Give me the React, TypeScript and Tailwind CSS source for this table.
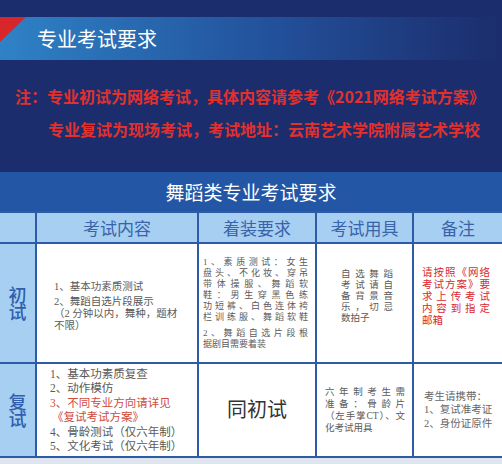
const sans = "font-['Noto_Sans_CJK_SC','Noto_Sans',sans-serif]";
const song = "font-['Liberation_Serif','Noto_Sans_CJK_SC',serif]";
const hei = "font-['Liberation_Sans','Noto_Sans_CJK_SC',sans-serif]";

function JLine({ text, last = false }: { text: string; last?: boolean }) {
  return (
    <div className={last ? "text-left" : "text-justify [text-align-last:justify]"}>{text}</div>
  );
}

export default function App() {
  return (
    <div className={`w-[502px] h-[464px] overflow-hidden bg-[#1b2d6c] ${sans}`}>
      {/* top strip */}
      <div className="h-[17px]" />

      {/* section banner */}
      <div className="relative h-[43px] flex items-center bg-gradient-to-r from-[#2f82c6] via-[#22509a] via-55% to-[#1b2d6c]">
        <svg className="absolute left-0 top-0" width="26" height="26" viewBox="0 0 26 26">
          <polygon points="0,0 26,0 0,25" fill="#d9262b" />
        </svg>
        <span className="pl-[37px] text-[20px] leading-none text-white">专业考试要求</span>
      </div>

      {/* notes */}
      <div className="h-[112px] flex flex-col pt-[28px] gap-[17px] font-bold text-[16px] leading-[16px] text-[#e2302d]">
        <div className="pl-[15px] whitespace-nowrap">注：专业初试为网络考试，具体内容请参考《2021网络考试方案》</div>
        <div className="pl-[48px] whitespace-nowrap">专业复试为现场考试，考试地址：云南艺术学院附属艺术学校</div>
      </div>

      {/* table */}
      <div className="bg-[#2d5ba8] flex flex-col gap-[2px] pb-[2px]">
        <div className="h-[39px] bg-[#2356a5] flex items-center justify-center text-white text-[19px] leading-none">
          舞蹈类专业考试要求
        </div>

        <div className="grid grid-cols-[35px_160px_116px_95px_88px] gap-[2px]">
          {/* header */}
          <div className="h-[29px] bg-[#a6cff2]" />
          <div className="h-[29px] bg-[#a6cff2] flex items-center justify-center text-[17px] text-[#3a63a8]">考试内容</div>
          <div className="h-[29px] bg-[#a6cff2] flex items-center justify-center text-[17px] text-[#3a63a8]">着装要求</div>
          <div className="h-[29px] bg-[#a6cff2] flex items-center justify-center text-[17px] text-[#3a63a8]">考试用具</div>
          <div className="h-[29px] bg-[#a6cff2] flex items-center justify-center text-[17px] text-[#3a63a8]">备注</div>

          {/* 初试 */}
          <div className="h-[118px] bg-[#a6cff2] flex items-center justify-center">
            <span className="[writing-mode:vertical-rl] text-[18px] leading-none tracking-[-1px] font-medium text-[#2f5fae]">初试</span>
          </div>
          <div className={`h-[118px] bg-white flex flex-col justify-center pl-[17px] pt-[6px] text-[10.5px] leading-[12px] text-[#5a5a5a] ${song}`}>
            <div>1、基本功素质测试</div>
            <div className="mt-[3px]">2、舞蹈自选片段展示</div>
            <div>（2 分钟以内，舞种，题材</div>
            <div>不限）</div>
          </div>
          <div className={`h-[118px] bg-white flex flex-col justify-center pl-[4px] pr-[7px] text-[9px] leading-[11px] text-[#5a5a5a] ${song}`}>
            <JLine text="1、素质测试：女生" />
            <JLine text="盘头、不化妆、穿吊" />
            <JLine text="带体操服、舞蹈软" />
            <JLine text="鞋：男生穿黑色练" />
            <JLine text="功短裤、白色连体袴" />
            <JLine text="栏训练服、舞蹈软鞋" />
            <div className="h-[5px]" />
            <JLine text="2、舞蹈自选片段根" />
            <JLine text="据剧目需要着装" last />
          </div>
          <div className={`h-[118px] bg-white flex flex-col justify-center pl-[24px] pr-[19px] pb-[14px] text-[9.5px] leading-[11px] text-[#5a5a5a] ${song}`}>
            <JLine text="自选舞蹈" />
            <JLine text="考试请自" />
            <JLine text="备背景音" />
            <JLine text="乐，切忌" />
            <JLine text="数拍子" last />
          </div>
          <div className={`h-[118px] bg-white flex flex-col justify-center pl-[8px] pr-[12px] pb-[14px] text-[10.5px] leading-[12px] text-[#d8282c] ${hei}`}>
            <JLine text="请按照《网络" />
            <JLine text="考试方案》要" />
            <JLine text="求上传考试" />
            <JLine text="内容到指定" />
            <JLine text="邮箱" last />
          </div>

          {/* 复试 */}
          <div className="h-[92px] bg-[#a6cff2] flex items-center justify-center">
            <span className="[writing-mode:vertical-rl] text-[18px] leading-none tracking-[-1px] font-medium text-[#2f5fae]">复试</span>
          </div>
          <div className={`h-[92px] bg-white flex flex-col justify-center pl-[13px] text-[11.5px] leading-[14.5px] text-[#5a5a5a] ${song}`}>
            <div>1、基本功素质复查</div>
            <div>2、动作模仿</div>
            <div className="text-[#cf4a3c]">3、不同专业方向请详见</div>
            <div className="text-[#cf4a3c] pl-[2px]">《复试考试方案》</div>
            <div>4、骨龄测试（仅六年制）</div>
            <div>5、文化考试（仅六年制）</div>
          </div>
          <div className={`h-[92px] bg-white flex items-center justify-center text-[20px] text-[#333] ${song}`}>同初试</div>
          <div className={`h-[92px] bg-white flex flex-col justify-center pl-[8px] pr-[7px] text-[9.5px] leading-[12px] text-[#5a5a5a] ${song}`}>
            <JLine text="六年制考生需" />
            <JLine text="准备：骨龄片" />
            <JLine text="（左手掌CT）、文" />
            <JLine text="化考试用具" last />
          </div>
          <div className={`h-[92px] bg-white flex flex-col justify-center pl-[10px] text-[10.5px] leading-[13.5px] text-[#666] ${song}`}>
            <div>考生请携带：</div>
            <div>1、复试准考证</div>
            <div>2、身份证原件</div>
          </div>
        </div>
      </div>
      <div className="h-[8px] bg-[#dfe5ef]" />
    </div>
  );
}
